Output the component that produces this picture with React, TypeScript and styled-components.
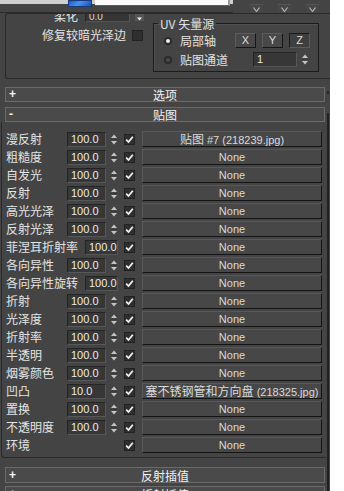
import React from 'react';
import styled, { createGlobalStyle } from 'styled-components';

const GlobalStyle = createGlobalStyle`
  html, body {
    margin: 0;
    padding: 0;
    background: #ffffff;
  }
`;

interface MapRow {
  label: string;
  value?: string;
  compact?: boolean;
  map?: string;
}

const mapRows: MapRow[] = [
  { label: '漫反射', value: '100.0', map: '贴图 #7 (218239.jpg)' },
  { label: '粗糙度', value: '100.0' },
  { label: '自发光', value: '100.0' },
  { label: '反射', value: '100.0' },
  { label: '高光光泽', value: '100.0' },
  { label: '反射光泽', value: '100.0' },
  { label: '菲涅耳折射率', value: '100.0', compact: true },
  { label: '各向异性', value: '100.0' },
  { label: '各向异性旋转', value: '100.0', compact: true },
  { label: '折射', value: '100.0' },
  { label: '光泽度', value: '100.0' },
  { label: '折射率', value: '100.0' },
  { label: '半透明', value: '100.0' },
  { label: '烟雾颜色', value: '100.0' },
  { label: '凹凸', value: '10.0', map: '塞不锈钢管和方向盘 (218325.jpg)' },
  { label: '置换', value: '100.0' },
  { label: '不透明度', value: '100.0' },
  { label: '环境' },
];

const Page = styled.div`
  width: 330px;
  height: 491px;
  overflow: hidden;
  background: #444444;
  color: #e2e2e2;
  font-family: "Noto Sans CJK SC", "Noto Sans", sans-serif;
  font-size: 12px;
  line-height: 14px;
`;

/* top strip (previous rollout, scrolled away) */
const TopStrip = styled.div`
  display: flex;
  height: 13px;
`;

const TitleArea = styled.div`
  width: 233px;
  height: 13px;
  box-sizing: border-box;
  border-bottom: 1px solid #2b2b2b;
`;

const LightBand = styled.div`
  display: flex;
  align-items: flex-start;
  height: 4px;
  background: #cfcfcf;
`;

const MaterialIcon = styled.div`
  flex: none;
  margin-left: 68px;
  width: 24px;
  height: 7px;
  box-sizing: border-box;
  border: 1px solid #163a7c;
  background: linear-gradient(135deg, #1f58c8 0%, #4a90f2 45%, #1c4fb4 100%);
`;

const NameField = styled.div`
  flex: none;
  margin-left: 3px;
  width: 135px;
  height: 6px;
  box-sizing: border-box;
  background: #fbfbfb;
  border-bottom: 1px solid #5a5a5a;
  border-right: 2px solid #9a9a9a;
`;

const ChevronRow = styled.div`
  display: flex;
  gap: 15px;
  margin-left: 17px;
`;

const ChevronButton = styled.div`
  width: 13px;
  height: 8px;
  margin-top: 4px;
  background: #474747;
  border-top: 1px solid #555;
  display: flex;
  justify-content: center;
  align-items: center;
`;

/* upper rollout (soften / UV source) */
const UpperPanel = styled.div`
  display: flex;
  align-items: flex-start;
  margin-left: 5px;
  height: 66px;
  box-sizing: border-box;
  border: 1px solid #2a2a2a;
  border-right: none;
  border-radius: 3px 0 0 3px;
  overflow: hidden;
`;

const LeftCol = styled.div`
  width: 138px;
  flex: none;
  display: flex;
  flex-direction: column;
`;

const RightRow = styled.div<{ $top: number; $pad?: number }>`
  display: flex;
  justify-content: flex-end;
  align-items: center;
  height: 14px;
  margin-top: ${p => p.$top}px;
  padding-right: ${p => p.$pad ?? 0}px;
`;

const SoftField = styled.div`
  margin-left: 7px;
  width: 45px;
  height: 11px;
  box-sizing: border-box;
  background: #363636;
  border: 1px solid;
  border-color: #262626 #555 #555 #262626;
  padding-left: 3px;
  font: 10px/9px "Liberation Sans", sans-serif;
  color: #d8d8d8;
`;

const DropButton = styled.div`
  margin-left: 5px;
  width: 9px;
  height: 9px;
  background: #555;
  display: flex;
  align-items: flex-end;
  justify-content: center;
`;

const GroupBox = styled.fieldset`
  margin: 3px 0 0 9px;
  padding: 0 0 4px 0;
  width: 166px;
  min-width: 0;
  box-sizing: border-box;
  border: 1px solid #1c1c1c;
  box-shadow: inset 1px 1px 0 #4f4f4f;
`;

const GroupTitle = styled.legend`
  margin-left: 4px;
  padding: 0 2px;
  font-size: 12px;
  line-height: 13px;
  color: #e0e0e0;
`;

const GroupRow = styled.div<{ $top: number }>`
  display: flex;
  align-items: center;
  height: 15px;
  margin-top: ${p => p.$top}px;
  padding-left: 10px;
`;

const Radio = styled.div<{ $on?: boolean }>`
  flex: none;
  width: 8px;
  height: 8px;
  box-sizing: border-box;
  border-radius: 50%;
  background: ${p => (p.$on ? '#f4f4f4' : '#4c4c4c')};
  border: 2px solid #2a2a2a;
`;

const RadioLabel = styled.span<{ $w: number }>`
  width: ${p => p.$w}px;
  margin-left: 8px;
  white-space: nowrap;
`;

const AxisButton = styled.div<{ $pressed?: boolean }>`
  width: 21px;
  height: 15px;
  box-sizing: border-box;
  margin-right: 6px;
  background: ${p => (p.$pressed ? '#3f3f3f' : '#484848')};
  border: 1px solid;
  border-color: ${p => (p.$pressed ? '#1a1a1a #5c5c5c #5c5c5c #1a1a1a' : '#5c5c5c #161616 #161616 #5c5c5c')};
  font: 11px/13px "Liberation Sans", sans-serif;
  color: #dcdcdc;
  text-align: center;
`;

/* body under the upper rollout */
const Body = styled.div`
  display: flex;
`;

const Content = styled.div`
  width: 326px;
  flex: none;
  display: flex;
  flex-direction: column;
`;

const ScrollCol = styled.div`
  flex: 1;
  display: flex;
  flex-direction: column;
  align-items: flex-start;
`;

const ScrollTick = styled.div`
  margin: 12px 0 0 1px;
  width: 2px;
  height: 3px;
  background: #2a2a2a;
`;

const ScrollTrack = styled.div`
  margin: 19px 0 0 1px;
  width: 2px;
  height: 400px;
  background: #222;
`;

const RolloutBar = styled.div<{ $top: number; $h?: number }>`
  display: grid;
  grid-template-columns: 1fr auto 1fr;
  align-items: center;
  margin: ${p => p.$top}px 0 0 5px;
  width: 320px;
  height: ${p => p.$h ?? 15}px;
  box-sizing: border-box;
  background: #4a4a4a;
  border: 1px solid #6a6a6a;
  color: #f2f2f2;
  font-size: 12px;
  line-height: 13px;
`;

const BarSign = styled.span`
  padding-left: 3px;
  font: bold 12px/13px "Liberation Sans", sans-serif;
  color: #f4f4f4;
`;

const MapBody = styled.div`
  margin-left: 1px;
  width: 325px;
  box-sizing: border-box;
  border-left: 1px solid #2a2a2a;
  border-bottom: 1px solid #2a2a2a;
  border-radius: 0 0 0 3px;
  padding: 8px 4px 3px 4px;
`;

const Row = styled.div`
  display: flex;
  align-items: center;
  height: 18px;
`;

const RowLabel = styled.span`
  flex: 1;
  min-width: 0;
  white-space: nowrap;
  color: #e4e4e4;
`;

const ValueGroup = styled.div<{ $w: number }>`
  flex: none;
  width: ${p => p.$w}px;
  display: flex;
  align-items: center;
`;

const ValueField = styled.div<{ $w: number }>`
  width: ${p => p.$w}px;
  height: 15px;
  box-sizing: border-box;
  background: #373737;
  border: 1px solid;
  border-color: #242424 #575757 #575757 #242424;
  padding-left: 3px;
  font: 11px/13px "Liberation Sans", sans-serif;
  color: #ececec;
`;

const Arrows = styled.div`
  margin-left: 4px;
  display: flex;
`;

const CheckBox = styled.div<{ $gap: number }>`
  flex: none;
  margin-left: ${p => p.$gap}px;
  width: 11px;
  height: 11px;
  box-sizing: border-box;
  background: #2f2f2f;
  border: 1px solid #222;
  display: flex;
  align-items: center;
  justify-content: center;
`;

const MapButton = styled.div`
  flex: none;
  margin-left: 7px;
  width: 180px;
  height: 16px;
  box-sizing: border-box;
  background: #474747;
  border: 1px solid;
  border-color: #585858 #141414 #141414 #585858;
  display: flex;
  align-items: center;
  justify-content: center;
  overflow: hidden;
  font: 11px/14px "Liberation Sans", "Noto Sans CJK SC", sans-serif;
  color: #dadada;
`;

const ButtonText = styled.span`
  white-space: pre;
`;

const Han = styled.span`
  font-family: "Noto Sans CJK SC", sans-serif;
  font-size: 12px;
`;

const SpinArrows: React.FC = () => (
  <svg width="8" height="15" viewBox="0 0 8 15">
    <polygon points="1,6 4,2.5 7,6" fill="#c4c4c4" />
    <line x1="1" y1="7.5" x2="7" y2="7.5" stroke="#3a3a3a" />
    <polygon points="1,9 4,12.5 7,9" fill="#c4c4c4" />
  </svg>
);

const Check: React.FC = () => (
  <svg width="9" height="9" viewBox="0 0 9 9">
    <polyline points="1.2,4.6 3.5,7 7.8,1.8" fill="none" stroke="#f2f2f2" strokeWidth="1.8" />
  </svg>
);

const Chevron: React.FC = () => (
  <svg width="7" height="5" viewBox="0 0 7 5">
    <polyline points="0.5,0.5 3.5,4.5 6.5,0.5" fill="none" stroke="#b4b4b4" strokeWidth="1.2" />
  </svg>
);

const splitHan = (text: string) =>
  text.split(/([\u4e00-\u9fff]+)/).map((part, i) =>
    /[\u4e00-\u9fff]/.test(part) ? <Han key={i}>{part}</Han> : <React.Fragment key={i}>{part}</React.Fragment>
  );

export default function App() {
  return (
    <>
      <GlobalStyle />
      <Page>
        <TopStrip>
          <TitleArea>
            <LightBand>
              <MaterialIcon />
              <NameField />
            </LightBand>
          </TitleArea>
          <ChevronRow>
            <ChevronButton><Chevron /></ChevronButton>
            <ChevronButton><Chevron /></ChevronButton>
            <ChevronButton><Chevron /></ChevronButton>
          </ChevronRow>
        </TopStrip>

        <UpperPanel>
          <LeftCol>
            <RightRow $top={-5}>
              <span>柔化</span>
              <SoftField>0.0</SoftField>
              <DropButton>
                <svg width="5" height="4" viewBox="0 0 5 4">
                  <polygon points="0,0.5 5,0.5 2.5,3.5" fill="#eee" />
                </svg>
              </DropButton>
            </RightRow>
            <RightRow $top={5} $pad={1}>
              <span>修复较暗光泽边</span>
              <CheckBox $gap={6} />
            </RightRow>
          </LeftCol>

          <GroupBox>
            <GroupTitle>UV 矢量源</GroupTitle>
            <GroupRow $top={3}>
              <Radio $on />
              <RadioLabel $w={55}>局部轴</RadioLabel>
              <AxisButton>X</AxisButton>
              <AxisButton>Y</AxisButton>
              <AxisButton $pressed>Z</AxisButton>
            </GroupRow>
            <GroupRow $top={4}>
              <Radio />
              <RadioLabel $w={73}>贴图通道</RadioLabel>
              <ValueField $w={44}>1</ValueField>
              <Arrows><SpinArrows /></Arrows>
            </GroupRow>
          </GroupBox>
        </UpperPanel>

        <Body>
          <Content>
            <RolloutBar $top={8}>
              <BarSign>+</BarSign>
              <span>选项</span>
              <span />
            </RolloutBar>
            <RolloutBar $top={5}>
              <BarSign>-</BarSign>
              <span>贴图</span>
              <span />
            </RolloutBar>

            <MapBody>
              {mapRows.map(row => (
                <Row key={row.label}>
                  <RowLabel>{row.label}</RowLabel>
                  {row.value && (
                    <ValueGroup $w={row.compact ? 33 : 51}>
                      <ValueField $w={row.compact ? 33 : 39}>{row.value}</ValueField>
                      {!row.compact && (
                        <Arrows><SpinArrows /></Arrows>
                      )}
                    </ValueGroup>
                  )}
                  <CheckBox $gap={6}><Check /></CheckBox>
                  <MapButton>
                    <ButtonText>{row.map ? splitHan(row.map) : 'None'}</ButtonText>
                  </MapButton>
                </Row>
              ))}
            </MapBody>

            <RolloutBar $top={9} $h={16}>
              <BarSign>+</BarSign>
              <span>反射插值</span>
              <span />
            </RolloutBar>
            <RolloutBar $top={3} $h={16}>
              <BarSign>+</BarSign>
              <span>折射插值</span>
              <span />
            </RolloutBar>
          </Content>
          <ScrollCol>
            <ScrollTick />
            <ScrollTrack />
          </ScrollCol>
        </Body>
      </Page>
    </>
  );
}
